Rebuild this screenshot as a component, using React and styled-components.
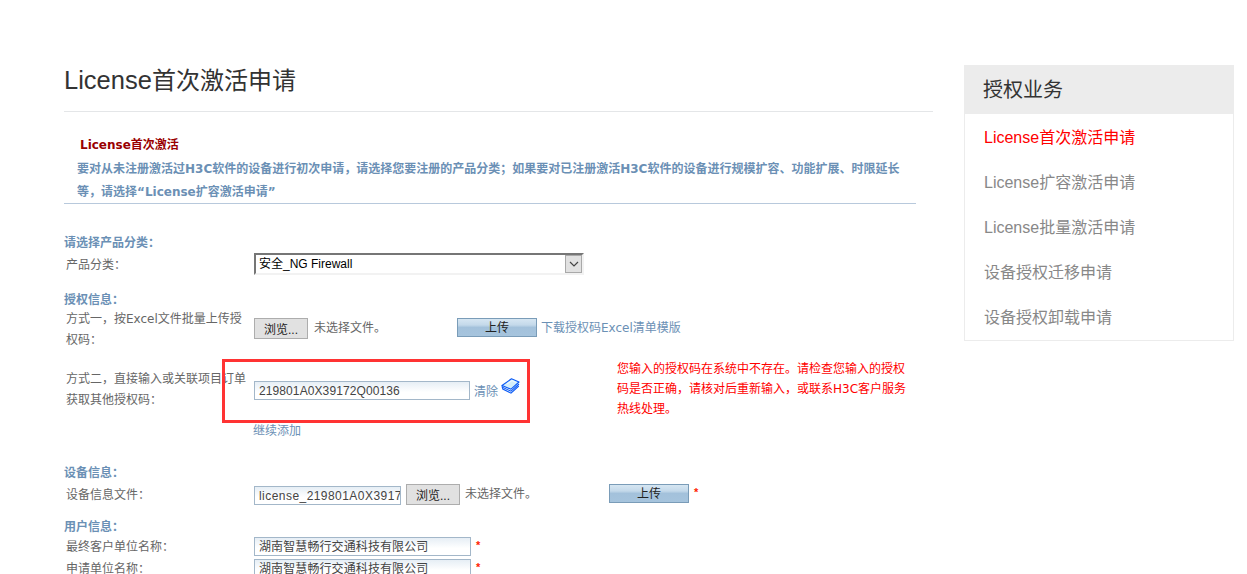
import React from "react";
import styled, { createGlobalStyle } from "styled-components";

const CN = `"Liberation Sans", "Noto Sans CJK SC", sans-serif`;
const WIDE = `"DejaVu Sans", "Noto Sans CJK SC", sans-serif`;

const GlobalStyle = createGlobalStyle`
  html, body { margin: 0; padding: 0; background: #fff; height: 574px; overflow: hidden; }
  body { font-family: ${CN}; font-size: 12px; color: #666; }
  * { box-sizing: border-box; }
`;

const sideItems = [
  "License首次激活申请",
  "License扩容激活申请",
  "License批量激活申请",
  "设备授权迁移申请",
  "设备授权卸载申请",
];

function BookIcon() {
  return (
    <svg width="19" height="16" viewBox="0 0 19 16">
      <path d="M1 7.5 L10.5 .8 L18 4 L10 11.2 Z" fill="#d4eefb" stroke="#0a5af5" strokeWidth="1.1" strokeLinejoin="round" />
      <path d="M1 7.5 L1.3 9.2 L10 13.2 L18 6" fill="none" stroke="#0a5af5" strokeWidth="1.1" />
      <path d="M1.3 9.2 L1.8 11 L10 15.2 L17.8 8" fill="none" stroke="#0a5af5" strokeWidth="1.1" />
      <path d="M6 6 L11 2.6 L14.5 4.2" fill="none" stroke="#f4fbff" strokeWidth="1" />
    </svg>
  );
}

function ChevronIcon() {
  return (
    <svg width="10" height="6" viewBox="0 0 10 6">
      <path d="M1 1 L5 5 L9 1" fill="none" stroke="#444" strokeWidth="1.2" />
    </svg>
  );
}

export default function App() {
  return (
    <>
      <GlobalStyle />
      <Page>
        <Main>
          <Title><TitleLatin>License</TitleLatin>首次激活申请</Title>
          <Intro>
            <IntroHead>License首次激活</IntroHead>
            <IntroText>
              要对从未注册激活过H3C软件的设备进行初次申请，请选择您要注册的产品分类；如果要对已注册激活H3C软件的设备进行规模扩容、功能扩展、时限延长等，请选择“License扩容激活申请”
            </IntroText>
          </Intro>

          <Form>
            <SectionHead $top={32}>请选择产品分类：</SectionHead>
            <Row $height={22} $top={3}>
              <RowLabel $pad={2}>产品分类：</RowLabel>
              <SelectBox>
                <SelectText>安全_NG Firewall</SelectText>
                <SelectArrow><ChevronIcon /></SelectArrow>
              </SelectBox>
            </Row>

            <SectionHead $top={18}>授权信息：</SectionHead>
            <Row $height={43} $top={1} $align="flex-start">
              <RowLabel $pad={1}>方式一，按Excel文件批量上传授权码：</RowLabel>
              <Controls $pad={10}>
                <BrowseButton>浏览...</BrowseButton>
                <FileNote>未选择文件。</FileNote>
                <UploadButton $left={79}>上传</UploadButton>
                <BlueLink $left={4}>下载授权码Excel清单模版</BlueLink>
              </Controls>
            </Row>

            <Row $height={61} $top={13} $align="flex-start">
              <RowLabel $pad={5}>方式二，直接输入或关联项目订单获取其他授权码：</RowLabel>
              <Controls $pad={17}>
                <CodeInput $width={216}>219801A0X39172Q00136</CodeInput>
                <BlueLink $left={4} $drop={1}>清除</BlueLink>
                <IconSlot><BookIcon /></IconSlot>
                <ErrorText>
                  您输入的授权码在系统中不存在。请检查您输入的授权码是否正确，请核对后重新输入，或联系H3C客户服务热线处理。
                </ErrorText>
              </Controls>
              <RedBox />
            </Row>
            <AddLink>继续添加</AddLink>

            <SectionHead $top={28}>设备信息：</SectionHead>
            <Row $height={21} $top={4}>
              <RowLabel $pad={2}>设备信息文件：</RowLabel>
              <Controls>
                <CodeInput $width={147} $drop={2} $spacing={0.45}>license_219801A0X39172</CodeInput>
                <BrowseButton $left={5}>浏览...</BrowseButton>
                <FileNote $left={5}>未选择文件。</FileNote>
                <UploadButton $left={80}>上传</UploadButton>
                <Star>*</Star>
              </Controls>
            </Row>

            <SectionHead $top={15}>用户信息：</SectionHead>
            <Row $height={19} $top={3}>
              <RowLabel $pad={2}>最终客户单位名称：</RowLabel>
              <Controls>
                <CodeInput $width={217}>湖南智慧畅行交通科技有限公司</CodeInput>
                <Star>*</Star>
              </Controls>
            </Row>
            <Row $height={19} $top={3}>
              <RowLabel $pad={2}>申请单位名称：</RowLabel>
              <Controls>
                <CodeInput $width={217}>湖南智慧畅行交通科技有限公司</CodeInput>
                <Star>*</Star>
              </Controls>
            </Row>
          </Form>
        </Main>

        <Side>
          <SideHead>授权业务</SideHead>
          <SideList>
            {sideItems.map((item, i) => (
              <SideItem key={item} $active={i === 0}>{item}</SideItem>
            ))}
          </SideList>
        </Side>
      </Page>
    </>
  );
}

const Page = styled.div`
  display: flex;
  align-items: flex-start;
  padding: 65px 13px 0 64px;
  gap: 31px;
  height: 574px;
  overflow: hidden;
`;

const Main = styled.div`
  width: 869px;
  flex: none;
`;

const Title = styled.h1`
  margin: 0;
  height: 47px;
  border-bottom: 1px solid #e4e6e8;
  font-size: 24px;
  font-weight: 400;
  line-height: 30px;
  color: #333;
`;

const TitleLatin = styled.span`
  font-size: 25.5px;
`;

const Intro = styled.div`
  width: 852px;
  height: 92px;
  padding: 23px 0 0 13px;
  border-bottom: 1px solid #b8c9dc;
  font-family: ${WIDE};
`;

const IntroHead = styled.div`
  padding-left: 3px;
  height: 23px;
  line-height: 20px;
  font-size: 12px;
  font-weight: 700;
  color: #990000;
`;

const IntroText = styled.div`
  line-height: 23px;
  font-size: 12px;
  font-weight: 700;
  color: #6b90b5;
`;

const Form = styled.div`
  position: relative;
`;

const SectionHead = styled.div`
  margin-top: ${(p) => p.$top}px;
  height: 14px;
  line-height: 14px;
  font-size: 12px;
  font-weight: 700;
  color: #6b90b5;
`;

const Row = styled.div`
  position: relative;
  display: flex;
  align-items: ${(p) => p.$align || "center"};
  height: ${(p) => p.$height}px;
  margin-top: ${(p) => p.$top}px;
`;

const RowLabel = styled.div`
  width: 190px;
  flex: none;
  padding: ${(p) => p.$pad || 0}px 6px 0 2px;
  font-family: ${WIDE};
  line-height: 21px;
  color: #666;
`;

const Controls = styled.div`
  display: flex;
  align-items: flex-start;
  flex: 1;
  padding-top: ${(p) => p.$pad || 0}px;
  position: relative;
`;

const SelectBox = styled.div`
  display: flex;
  width: 330px;
  height: 22px;
  border-top: 2px solid #767676;
  border-left: 2px solid #767676;
  border-bottom: 2px solid #f2f2f2;
  border-right: 2px solid #f2f2f2;
`;

const SelectText = styled.div`
  flex: 1;
  padding-left: 3px;
  line-height: 19px;
  color: #000;
`;

const SelectArrow = styled.div`
  width: 17px;
  height: 18px;
  background: #e1e1e1;
  border: 1px solid #a9a9a9;
  display: flex;
  align-items: center;
  justify-content: center;
`;

const BrowseButton = styled.button`
  flex: none;
  width: 54px;
  height: 21px;
  margin-left: ${(p) => p.$left || 0}px;
  padding: 0;
  background: #e1e1e1;
  border: 1px solid #adadad;
  font: 12px ${CN};
  color: #222;
`;

const FileNote = styled.span`
  margin-left: ${(p) => p.$left || 6}px;
  width: 64px;
  flex: none;
  line-height: 21px;
  white-space: nowrap;
  color: #666;
`;

const UploadButton = styled.button`
  flex: none;
  width: 80px;
  height: 19px;
  margin: 0 0 0 ${(p) => p.$left}px;
  padding: 2px 0 0;
  border: 1px solid #7a9cb8;
  background: linear-gradient(to bottom, #d6e6f2 0%, #c4d9ea 35%, #a3c1db 50%, #a6c4dd 100%);
  font: 12px ${CN};
  line-height: 15px;
  color: #222;
`;

const BlueLink = styled.a`
  margin: ${(p) => p.$drop || 0}px 0 0 ${(p) => p.$left}px;
  font-family: ${WIDE};
  line-height: 21px;
  white-space: nowrap;
  color: #6b90b5;
`;

const CodeInput = styled.div`
  flex: none;
  width: ${(p) => p.$width}px;
  height: 19px;
  margin-top: ${(p) => p.$drop || 0}px;
  padding: 0 4px;
  border: 1px solid #a3b7c9;
  background: linear-gradient(to bottom, #e6eef5 0%, #fff 60%);
  line-height: 19px;
  letter-spacing: ${(p) => p.$spacing || 0.1}px;
  color: #444;
  overflow: hidden;
  white-space: nowrap;
`;

const IconSlot = styled.span`
  margin: -3px 0 0 3px;
  display: block;
  height: 16px;
`;

const ErrorText = styled.div`
  position: absolute;
  left: 363px;
  top: -5px;
  width: 295px;
  font-family: ${WIDE};
  line-height: 20px;
  color: #ff0000;
`;

const RedBox = styled.div`
  position: absolute;
  left: 158px;
  top: -5px;
  width: 308px;
  height: 64px;
  border: 3px solid #f33;
  pointer-events: none;
`;

const AddLink = styled.a`
  display: block;
  margin: -1px 0 0 189px;
  height: 14px;
  font-family: ${WIDE};
  line-height: 14px;
  color: #6b90b5;
`;

const Star = styled.span`
  margin-left: 5px;
  font-size: 11px;
  line-height: 16px;
  font-weight: 700;
  color: #ff2200;
`;

const Side = styled.aside`
  width: 270px;
  flex: none;
  border: 1px solid #ececec;
  border-top: 0;
`;

const SideHead = styled.div`
  margin: 0 -1px;
  height: 49px;
  padding-left: 19px;
  background: #ececec;
  font-size: 20px;
  line-height: 51px;
  color: #333;
`;

const SideList = styled.div`
  padding: 1px 0 0 19px;
  height: 226px;
`;

const SideItem = styled.div`
  height: 45px;
  line-height: 45px;
  font-size: 16px;
  color: ${(p) => (p.$active ? "#ff0000" : "#888")};
`;
